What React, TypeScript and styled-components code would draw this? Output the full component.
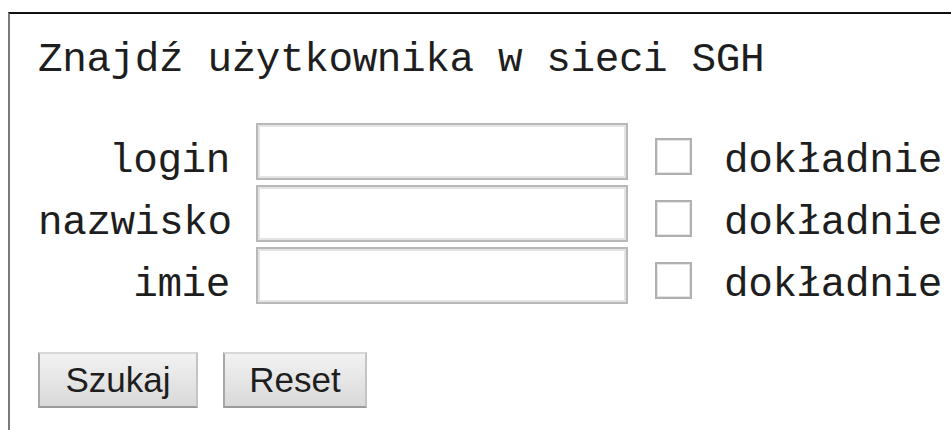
import React, { useState } from "react";
import styled, { createGlobalStyle } from "styled-components";

const GlobalStyle = createGlobalStyle`
  html, body {
    margin: 0;
    padding: 0;
    background: #fff;
  }
`;

const mono = `"Courier New", "Nimbus Mono PS", FreeMono, "Liberation Mono", monospace`;

const Frame = styled.div`
  margin: 12px 0 0 8px;
  border-top: 2px solid #111;
  border-left: 2px solid #7a7a7a;
  padding: 22px 0 0 28px;
  height: 418px;
  box-sizing: border-box;
  font-family: ${mono};
  color: #1e1e1e;
`;

const Title = styled.h1`
  margin: 0 0 39px 0;
  font-size: 41px;
  font-weight: normal;
  letter-spacing: -0.4px;
  line-height: 48px;
`;

const Grid = styled.div`
  display: grid;
  grid-template-columns: 192px 372px 37px auto;
  grid-auto-rows: 57px;
  column-gap: 26px;
  row-gap: 5px;
  align-items: center;
`;

const Label = styled.label`
  text-align: right;
  padding-top: 20px;
  font-size: 41px;
  letter-spacing: -0.4px;
  line-height: 37px;
`;

const TextField = styled.input`
  box-sizing: border-box;
  width: 372px;
  height: 57px;
  margin: 0;
  border: 2px solid #b8b8b8;
  box-shadow: inset 0 0 0 2px #e4e4e4;
  background: #fff;
  outline: none;
`;

const Check = styled.input`
  appearance: none;
  box-sizing: border-box;
  width: 37px;
  height: 37px;
  margin: 10px 0 0 1px;
  border: 2px solid #b0b0b0;
  box-shadow: inset 0 0 0 1px #e6e6e6;
  background: #fff;
`;

const CheckLabel = styled.span`
  margin-left: 7px;
  padding-top: 20px;
  font-size: 41px;
  letter-spacing: -0.4px;
  line-height: 37px;
`;

const Buttons = styled.div`
  display: flex;
  gap: 25px;
  margin-top: 48px;
`;

const Button = styled.button<{ $width: number }>`
  box-sizing: border-box;
  width: ${(p) => p.$width}px;
  height: 56px;
  padding: 0;
  border: 2px solid;
  border-color: #d8d8d8 #c4c4c4 #9a9a9a #a8a8a8;
  background: linear-gradient(#f2f2f2, #d9d9d9);
  font-family: "Liberation Sans", Arial, sans-serif;
  font-size: 35px;
  color: #1e1e1e;
`;

const fields = [
  { id: "login", label: "login" },
  { id: "nazwisko", label: "nazwisko" },
  { id: "imie", label: "imie" },
];

export default function App() {
  const [values, setValues] = useState<Record<string, string>>({});
  const [exact, setExact] = useState<Record<string, boolean>>({});

  function reset() {
    setValues({});
    setExact({});
  }

  return (
    <>
      <GlobalStyle />
      <Frame>
        <Title>Znajdź użytkownika w sieci SGH</Title>
        <Grid>
          {fields.map((f) => (
            <React.Fragment key={f.id}>
              <Label htmlFor={f.id}>{f.label}</Label>
              <TextField
                id={f.id}
                value={values[f.id] || ""}
                onChange={(e) => setValues({ ...values, [f.id]: e.target.value })}
              />
              <Check
                type="checkbox"
                checked={!!exact[f.id]}
                onChange={(e) => setExact({ ...exact, [f.id]: e.target.checked })}
              />
              <CheckLabel>dokładnie</CheckLabel>
            </React.Fragment>
          ))}
        </Grid>
        <Buttons>
          <Button $width={160}>Szukaj</Button>
          <Button $width={144} onClick={reset}>
            Reset
          </Button>
        </Buttons>
      </Frame>
    </>
  );
}
